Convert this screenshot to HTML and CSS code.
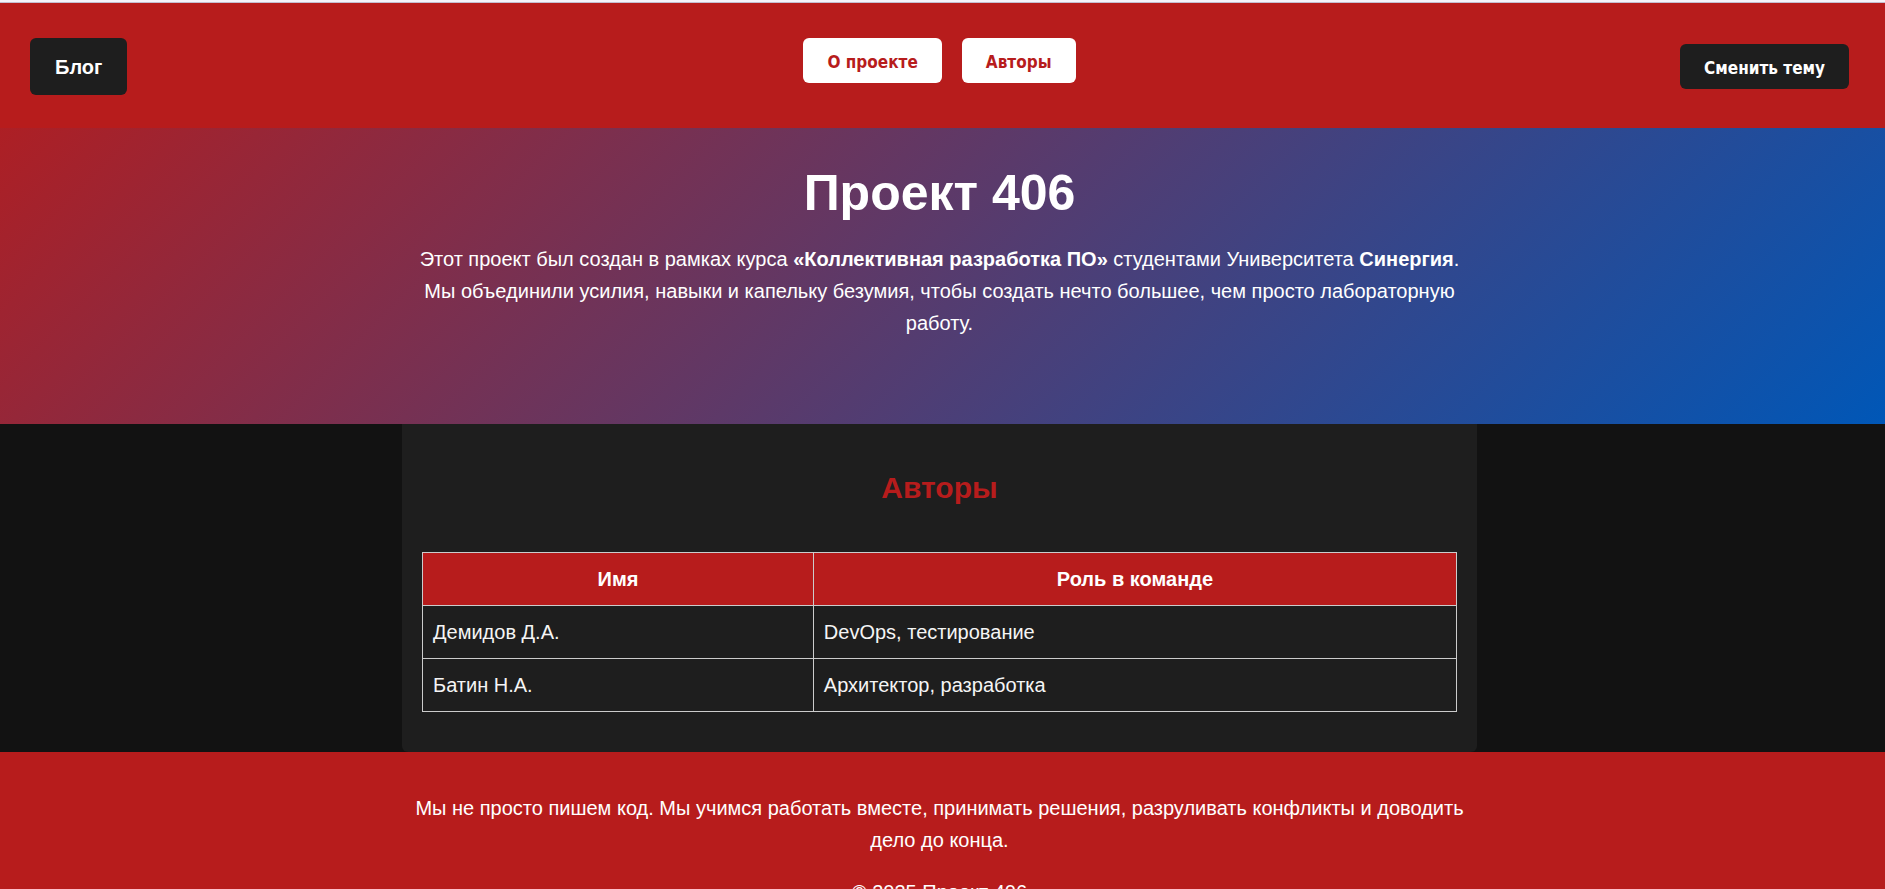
FILE: index.html
```html
<!DOCTYPE html>
<html lang="ru">
<head>
  <meta charset="utf-8">
  <meta name="viewport" content="width=device-width, initial-scale=1">
  <title>Проект 406</title>
  <link rel="stylesheet" href="styles.css">
</head>
<body>
  <div class="top">
    <header class="header">
      <a class="btn btn-blog" href="#blog">Блог</a>
      <nav class="nav">
        <button class="btn btn-light" type="button">О проекте</button>
        <button class="btn btn-light" type="button">Авторы</button>
      </nav>
      <button class="btn btn-theme" type="button">Сменить тему</button>
    </header>
    <section class="hero">
      <h1 class="hero-title">Проект 406</h1>
      <p class="text">Этот проект был создан в рамках курса <strong>«Коллективная разработка ПО»</strong> студентами Университета <strong>Синергия</strong>. Мы объединили усилия, навыки и капельку безумия, чтобы создать нечто большее, чем просто лабораторную работу.</p>
    </section>
  </div>
  <main class="main">
    <section class="card">
      <h2 class="card-title">Авторы</h2>
      <table class="authors">
        <thead>
          <tr><th scope="col">Имя</th><th scope="col">Роль в команде</th></tr>
        </thead>
        <tbody>
          <tr><td>Демидов Д.А.</td><td>DevOps, тестирование</td></tr>
          <tr><td>Батин Н.А.</td><td>Архитектор, разработка</td></tr>
        </tbody>
      </table>
    </section>
  </main>
  <footer class="footer">
    <p class="text">Мы не просто пишем код. Мы учимся работать вместе, принимать решения, разруливать конфликты и доводить дело до конца.</p>
    <p class="text">© 2025 Проект 406</p>
  </footer>
</body>
</html>
```
FILE: styles.css
```css
:root {
  --red: #b71c1c;
  --blue: #0057b7;
  --surface: #1e1e1e;
  --page: #121212;
  --gutter: 6px;
  --content: 1075px;
}

* {
  box-sizing: border-box;
}

html {
  scrollbar-width: none;
}

body {
  margin: 0;
  background: var(--page);
  color: #f5f5f5;
  font: 20px/32px "Liberation Sans", Arial, sans-serif;
}

.top {
  border-top: 3px solid #f4f4fa;
  background: linear-gradient(135deg, var(--red), var(--blue));
}

.header {
  display: grid;
  grid-template-columns: 1fr auto 1fr;
  align-items: center;
  padding: 35px calc(30px + var(--gutter)) 33px 30px;
  background: var(--red);
  box-shadow: 0 -1px 0 #c4bfd0;
}

.nav {
  display: flex;
  gap: 20px;
  align-self: start;
}

.btn {
  border: 0;
  border-radius: 6px;
  padding: 13px 25px 12px;
  font-weight: bold;
  text-decoration: none;
  cursor: pointer;
}

.btn-blog {
  justify-self: start;
  background: var(--surface);
  color: #fff;
}

.btn-light,
.btn-theme {
  padding: 14px 24px 11px;
  font: bold 17px/20px "DejaVu Sans Condensed", Tahoma, sans-serif;
}

.btn-light {
  background: #fff;
  color: var(--red);
}

.btn-theme {
  justify-self: end;
  background: var(--surface);
  color: #fff;
}

.hero {
  padding: 25px var(--gutter) 85px 0;
  color: #fff;
  text-align: center;
}

.hero-title {
  margin: 0 0 10px;
  font-size: 50px;
  line-height: 80px;
}

.text {
  max-width: var(--content);
  margin: 0 auto 20px;
}

.hero .text {
  margin-bottom: 0;
}

.main {
  padding-right: var(--gutter);
}

.card {
  max-width: var(--content);
  margin: 0 auto;
  padding: 40px 20px;
  border-radius: 0 0 6px 6px;
  background: var(--surface);
}

.card-title {
  margin: 0 0 40px;
  color: var(--red);
  font-size: 30px;
  line-height: 48px;
  text-align: center;
}

.authors {
  width: 100%;
  border-collapse: collapse;
}

.authors th,
.authors td {
  border: 1px solid #ccc;
  padding: 10px;
  text-align: left;
}

.authors th {
  background: var(--red);
  color: #fff;
  text-align: center;
}

.footer {
  padding: 40px var(--gutter) 20px 0;
  background: var(--red);
  color: #fff;
  text-align: center;
}
```
